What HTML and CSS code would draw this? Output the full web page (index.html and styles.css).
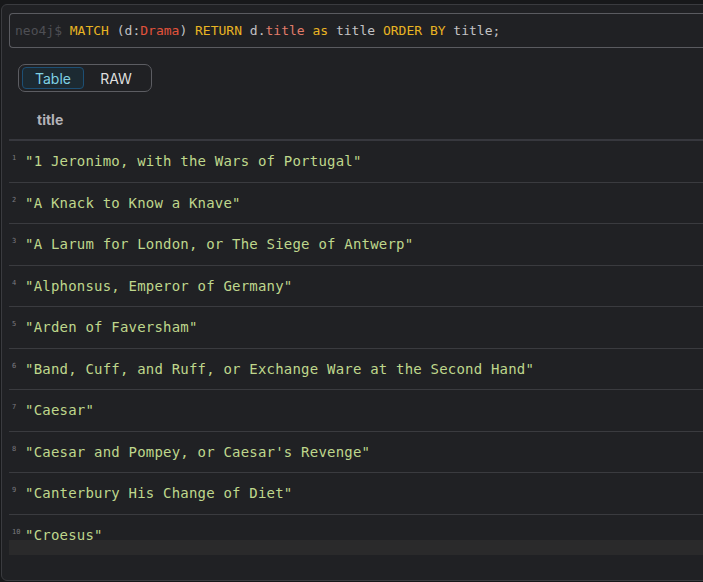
FILE: index.html
```html
<!DOCTYPE html>
<html>
<head>
<meta charset="utf-8">
<link rel="stylesheet" href="styles.css">
</head>
<body>
<div class="card">
  <div class="query"><span class="prompt">neo4j$</span> <span class="kw">MATCH</span> (d:<span class="label">Drama</span>) <span class="kw">RETURN</span> d.<span class="prop">title</span> <span class="kw">as</span> title <span class="kw">ORDER BY</span> title;</div>
  <div class="toggle">
    <button class="tab active">Table</button>
    <button class="tab">RAW</button>
  </div>
  <div class="viewport">
    <div class="head"><span class="head-cell">title</span></div>
    <div class="row"><span class="num">1</span><span class="val">"1 Jeronimo, with the Wars of Portugal"</span></div>
    <div class="row"><span class="num">2</span><span class="val">"A Knack to Know a Knave"</span></div>
    <div class="row"><span class="num">3</span><span class="val">"A Larum for London, or The Siege of Antwerp"</span></div>
    <div class="row"><span class="num">4</span><span class="val">"Alphonsus, Emperor of Germany"</span></div>
    <div class="row"><span class="num">5</span><span class="val">"Arden of Faversham"</span></div>
    <div class="row"><span class="num">6</span><span class="val">"Band, Cuff, and Ruff, or Exchange Ware at the Second Hand"</span></div>
    <div class="row"><span class="num">7</span><span class="val">"Caesar"</span></div>
    <div class="row"><span class="num">8</span><span class="val">"Caesar and Pompey, or Caesar's Revenge"</span></div>
    <div class="row"><span class="num">9</span><span class="val">"Canterbury His Change of Diet"</span></div>
    <div class="row"><span class="num">10</span><span class="val">"Croesus"</span></div>
  </div>
  <div class="scrollbar"></div>
</div>
</body>
</html>
```
FILE: styles.css
```css
html, body {
  margin: 0;
  padding: 0;
  background: #17181a;
  overflow: hidden;
  height: 582px;
}
.card {
  box-sizing: border-box;
  margin: 4px -12px 0 1px;
  height: 577px;
  border: 1px solid #3a3b3f;
  border-radius: 6px;
  background: #202124;
  padding: 8px 0 0 7px;
  display: flex;
  flex-direction: column;
}
.query {
  box-sizing: border-box;
  height: 35px;
  border: 1px solid #5a5b60;
  border-right: none;
  border-radius: 4px 0 0 4px;
  padding: 0 0 0 5px;
  line-height: 33px;
  white-space: pre;
  font-family: "DejaVu Sans Mono", monospace;
  font-size: 13px;
  color: #c2c2c4;
}
.prompt { color: #4e4f54; }
.kw { color: #e8b423; }
.label { color: #e2533c; }
.prop { color: #e07c6a; }
.toggle {
  align-self: flex-start;
  margin: 16px 0 0 9px;
  box-sizing: border-box;
  width: 134px;
  height: 28px;
  border: 1px solid #5c5d62;
  border-radius: 7px;
  padding: 2px 3px;
  display: flex;
}
.tab {
  box-sizing: border-box;
  flex: 0 0 62px;
  height: 22px;
  margin: 0;
  padding: 0;
  border: 1px solid transparent;
  border-radius: 4px;
  background: transparent;
  font-family: Inter, "Noto Sans", sans-serif;
  font-size: 14px;
  color: #dedede;
}
.tab + .tab { flex: 1 1 auto; }
.tab.active {
  border-color: #1d4f74;
  background: #1c2a32;
  color: #7fd2e4;
}
.viewport {
  height: 448px;
  overflow: hidden;
}
.head {
  box-sizing: border-box;
  height: 49px;
  border-bottom: 2px solid #37383e;
  padding: 0 0 0 28px;
  display: flex;
  align-items: center;
}
.head-cell {
  font-family: Inter, "Noto Sans", sans-serif;
  font-weight: 700;
  font-size: 14px;
  color: #b3b3b8;
  padding-top: 7px;
}
.row {
  box-sizing: border-box;
  height: 41.5px;
  border-bottom: 1px solid #3a3b3f;
  display: flex;
  align-items: center;
}
.num {
  box-sizing: border-box;
  width: 16px;
  padding-left: 3px;
  font-family: "DejaVu Sans Mono", monospace;
  font-size: 7px;
  color: #7b7b80;
  position: relative;
  top: -3px;
}
.val {
  font-family: "DejaVu Sans Mono", monospace;
  font-size: 14px;
  letter-spacing: 0.2px;
  color: #bfd78c;
  white-space: pre;
}
.scrollbar {
  height: 15px;
  background: #2a2a2b;
}
```
